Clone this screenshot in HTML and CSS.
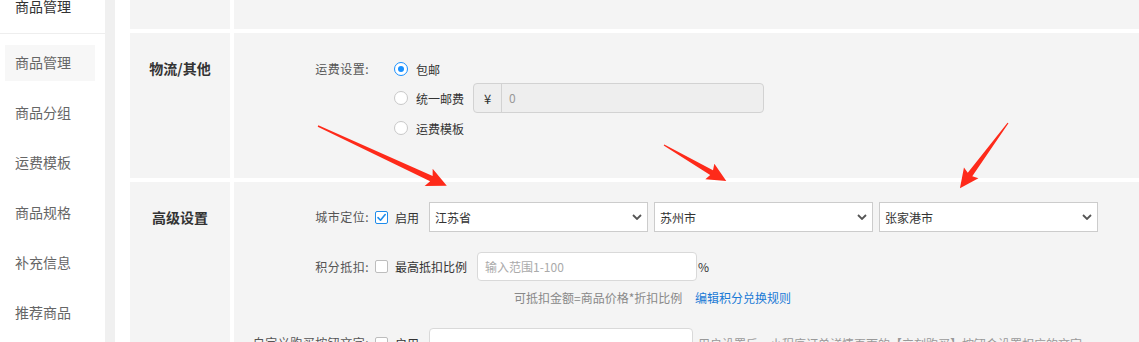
FILE: index.html
```html
<!DOCTYPE html>
<html lang="zh-CN">
<head>
<meta charset="utf-8">
<title>商品管理</title>
<link rel="stylesheet" href="styles.css">
</head>
<body>
<div class="app">
  <aside class="sidebar">
    <div class="side-head">商品管理</div>
    <ul class="side-nav">
      <li class="active">商品管理</li>
      <li>商品分组</li>
      <li>运费模板</li>
      <li>商品规格</li>
      <li>补充信息</li>
      <li>推荐商品</li>
    </ul>
  </aside>
  <div class="divider"></div>
  <main class="main">
    <div class="table">
      <div class="cell-label"></div>
      <div class="cell-body"></div>

      <div class="cell-label">物流/其他</div>
      <div class="cell-body body-logistics">
        <div class="field">
          <span class="field-label">运费设置:</span>
          <div class="radios">
            <label class="option opt-1"><span class="radio checked"></span><span>包邮</span></label>
            <label class="option opt-2"><span class="radio"></span><span>统一邮费</span>
              <span class="input-group"><span class="addon">¥</span><span class="ig-value">0</span></span>
            </label>
            <label class="option opt-3"><span class="radio"></span><span>运费模板</span></label>
          </div>
        </div>
      </div>

      <div class="cell-label">高级设置</div>
      <div class="cell-body body-advanced">
        <div class="line line-city">
          <span class="field-label">城市定位:</span>
          <span class="checkbox checked"><svg viewBox="0 0 13 13" width="13" height="13"><path d="M3 6.6 L5.5 9.2 L10.2 3.6" fill="none" stroke="#1f8ceb" stroke-width="1.6" stroke-linecap="round" stroke-linejoin="round"/></svg></span>
          <span class="check-text">启用</span>
          <div class="select"><span>江苏省</span><svg class="chev" viewBox="0 0 10 6" width="10" height="6"><path d="M1 1 L5 5 L9 1" fill="none" stroke="#555" stroke-width="1.8"/></svg></div>
          <div class="select"><span>苏州市</span><svg class="chev" viewBox="0 0 10 6" width="10" height="6"><path d="M1 1 L5 5 L9 1" fill="none" stroke="#555" stroke-width="1.8"/></svg></div>
          <div class="select"><span>张家港市</span><svg class="chev" viewBox="0 0 10 6" width="10" height="6"><path d="M1 1 L5 5 L9 1" fill="none" stroke="#555" stroke-width="1.8"/></svg></div>
        </div>
        <div class="line line-points">
          <span class="field-label">积分抵扣:</span>
          <span class="checkbox"></span>
          <span class="check-text">最高抵扣比例</span>
          <div class="text-input ratio-input"><span class="placeholder">输入范围1-100</span></div>
          <span class="unit">%</span>
        </div>
        <div class="hint-line">
          <span class="hint">可抵扣金额=商品价格*折扣比例</span>
          <a class="link">编辑积分兑换规则</a>
        </div>
        <div class="line line-custom">
          <span class="field-label">自定义购买按钮文字:</span>
          <span class="checkbox"></span>
          <span class="check-text">启用</span>
          <div class="text-input custom-input"></div>
          <span class="help">用户设置后，小程序订单详情页面的【立刻购买】按钮会设置相应的文字</span>
        </div>
      </div>
    </div>
  </main>

  <svg class="arrows" width="1139" height="342" viewBox="0 0 1139 342">
    <g transform="translate(318 126) rotate(24.9)">
      <polygon points="0,-0.7 125,-3 122,-9.5 142,0 122,9.5 125,3 0,0.7" fill="#fe2a1a"/>
    </g>
    <g transform="translate(664 145) rotate(30.1)">
      <polygon points="0,-0.6 55,-2.8 53,-9 72,0 53,9 55,2.8 0,0.6" fill="#fe2a1a"/>
    </g>
    <g transform="translate(1008 123) rotate(126.4)">
      <polygon points="0,-0.6 64,-2.8 62,-9 81,0 62,9 64,2.8 0,0.6" fill="#fe2a1a"/>
    </g>
  </svg>
</div>
</body>
</html>
```
FILE: styles.css
```css
* { box-sizing: border-box; margin: 0; padding: 0; }
html, body { width: 1139px; height: 342px; overflow: hidden; background: #fff; }
body {
  font-family: "Noto Sans CJK SC", "Microsoft YaHei", sans-serif;
  font-size: 12px;
  color: #333;
}
.app { position: relative; display: flex; height: 342px; }

/* sidebar */
.sidebar { width: 105px; flex: none; background: #fff; }
.side-head {
  height: 34px;
  border-bottom: 1px solid #eee;
  padding-left: 15px;
  font-size: 14px;
  line-height: 13px;
  color: #333;
}
.side-nav { list-style: none; padding-top: 11px; }
.side-nav li {
  height: 36px;
  line-height: 34px;
  margin: 0 10px 14px 5px;
  padding-left: 10px;
  font-size: 14px;
  color: #666;
}
.side-nav li.active { background: #f7f7f7; }

.divider { width: 10px; flex: none; background: #f0f0f0; }

/* main */
.main { flex: 1; padding-left: 15px; background: #fff; }
.table {
  display: grid;
  grid-template-columns: 100px 1fr;
  grid-template-rows: 29px 145px 200px;
  gap: 4px;
}
.cell-label {
  background: #f4f4f4;
  text-align: center;
  font-size: 14px;
  font-weight: bold;
  line-height: 16px;
  padding-top: 27px;
  color: #333;
}
.cell-body { background: #f4f4f4; }

.field-label {
  width: 135px;
  flex: none;
  text-align: right;
  color: #555;
  line-height: 20px;
  white-space: nowrap;
  letter-spacing: 0.5px;
}

/* logistics */
.body-logistics { padding-top: 26px; }
.field { display: flex; align-items: flex-start; }
.radios { margin-left: 25px; display: flex; flex-direction: column; }
.option { display: flex; align-items: center; height: 20px; color: #333; }
.opt-2 { height: 30px; margin-top: 4px; }
.opt-3 { margin-top: 5px; }
.radio {
  width: 14px; height: 14px;
  border: 1px solid #c8c8c8;
  border-radius: 50%;
  background: #fff;
  margin-right: 8px;
  flex: none;
  display: flex; align-items: center; justify-content: center;
}
.radio.checked { border-color: #1890ff; }
.radio.checked::after {
  content: "";
  width: 6px; height: 6px;
  border-radius: 50%;
  background: #1890ff;
}
.input-group {
  display: flex;
  margin-left: 9px;
  width: 291px;
  height: 30px;
  border: 1px solid #d2d2d2;
  border-radius: 4px;
  background: #eee;
}
.addon {
  width: 28px;
  border-right: 1px solid #d2d2d2;
  display: flex; align-items: center; justify-content: center;
  font-size: 13px;
  color: #333;
}
.ig-value { padding-left: 7px; line-height: 28px; color: #999; }

/* advanced */
.body-advanced { padding-top: 20px; }
.line { display: flex; align-items: center; }
.line-city { height: 30px; }
.line-points { height: 29px; margin-top: 20px; }
.line-custom { height: 30px; margin-top: 22px; }
.checkbox {
  width: 13px; height: 13px;
  flex: none;
  margin-left: 6px;
  border: 1px solid #bdbdbd;
  border-radius: 2px;
  background: #fff;
  position: relative;
}
.checkbox.checked { border-color: #1f8ceb; }
.checkbox svg { position: absolute; left: -1px; top: -1px; }
.check-text { margin-left: 7px; margin-right: 10px; color: #333; white-space: nowrap; }
.select {
  width: 219px;
  height: 30px;
  flex: none;
  margin-right: 6px;
  border: 1px solid #ccc;
  background: #fff;
  display: flex;
  align-items: center;
  justify-content: space-between;
  padding: 0 5px;
  color: #333;
}
.chev { flex: none; }
.text-input {
  height: 100%;
  flex: none;
  border: 1px solid #d9d9d9;
  border-radius: 4px;
  background: #fff;
  display: flex;
  align-items: center;
  padding-left: 7px;
}
.ratio-input { width: 220px; }
.custom-input { width: 264px; }
.placeholder { color: #aaa; }
.unit { margin-left: 1px; color: #333; }
.hint-line { margin-top: 9px; padding-left: 280px; line-height: 16px; }
.hint { color: #888; }
.link { margin-left: 10px; color: #1a7ad6; text-decoration: none; }
.help { margin-left: 5px; color: #999; white-space: nowrap; }

.arrows { position: absolute; left: 0; top: 0; pointer-events: none; }
```
